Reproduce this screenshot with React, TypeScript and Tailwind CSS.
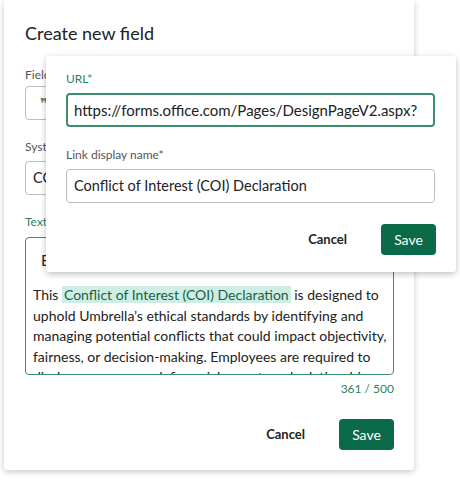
import React from 'react';

const font = { fontFamily: 'Lato, "Noto Sans", sans-serif' };

function Label({ children, green }: { children: React.ReactNode; green?: boolean }) {
  return (
    <div className={`text-[12px] leading-[18px] ${green ? 'text-[#2f7f5f]' : 'text-[#555]'}`}>
      {children}
    </div>
  );
}

function LinkPopover() {
  return (
    <div className="absolute left-[46px] top-[56px] w-[410px] h-[216px] bg-white rounded-[3px] shadow-[0_2px_6px_rgba(0,0,0,0.25)] px-[20px] pt-[14px]">
      <Label green>URL*</Label>
      <div className="mt-[5px] h-[34px] w-[369px] rounded-[4px] border-2 border-[#3b8f6e] flex items-center px-[6px] text-[15px] text-[#222] whitespace-nowrap overflow-hidden">
        https://forms.office.com/Pages/DesignPageV2.aspx?
      </div>
      <div className="mt-[19px]">
        <Label>Link display name*</Label>
      </div>
      <div className="mt-[5px] h-[34px] w-[369px] rounded-[4px] border border-[#bdbdbd] flex items-center px-[7px] text-[14.5px] text-[#222]">
        Conflict of Interest (COI) Declaration
      </div>
      <div className="mt-[21px] flex items-center justify-end gap-[34px]">
        <button className="text-[13px] font-bold text-[#222]">Cancel</button>
        <button className="h-[31px] w-[55px] rounded-[4px] bg-[#0b6a47] text-white text-[14px]">Save</button>
      </div>
    </div>
  );
}

export default function App() {
  return (
    <div className="relative w-[460px] h-[480px] bg-white overflow-hidden" style={font}>
      {/* main dialog */}
      <div className="ml-[4px] w-[410px] h-[470px] bg-white rounded-b-[3px] shadow-[0_2px_6px_rgba(0,0,0,0.22)] px-[21px] pt-[19px]">
        <h2 className="text-[18px] leading-[28px] text-[#222]">Create new field</h2>

        <div className="mt-[19px]">
          <Label>Field</Label>
        </div>
        <div className="mt-[2px] h-[34px] w-[120px] rounded-[4px] border border-[#bdbdbd] flex items-center pl-[14px] text-[15px] text-[#777]">
          ❞
        </div>

        <div className="mt-[18px]">
          <Label>System name</Label>
        </div>
        <div className="mt-[5px] h-[34px] w-[368px] rounded-[4px] border border-[#bdbdbd] flex items-center px-[7px] text-[14.5px] text-[#222]">
          COI Declaration
        </div>

        <div className="mt-[18px]">
          <Label green>Text</Label>
        </div>
        <div className="mt-[6px] h-[138px] w-[369px] rounded-[4px] border border-[#3b8f6e] overflow-hidden">
          <div className="h-[44px] flex items-center pl-[15px] text-[15px] text-[#222]">B</div>
          <div className="px-[7px] pt-[3px] text-[14px] leading-[20.5px] text-[#222] whitespace-nowrap">
            This <span className="bg-[#cdeee4] text-[#1d5e45] px-[2px]">Conflict of Interest (COI) Declaration</span> is designed to
            <br />
            uphold Umbrella’s ethical standards by identifying and
            <br />
            managing potential conflicts that could impact objectivity,
            <br />
            fairness, or decision-making. Employees are required to
            <br />
            disclose any personal, financial, or external relationships
          </div>
        </div>
        <div className="w-[369px] mt-[6px] text-right text-[12px] leading-[16px] text-[#2f7f5f]">361 / 500</div>

        <div className="w-[369px] mt-[22px] flex items-center justify-end gap-[34px]">
          <button className="text-[13px] font-bold text-[#222]">Cancel</button>
          <button className="h-[31px] w-[55px] rounded-[4px] bg-[#0b6a47] text-white text-[14px]">Save</button>
        </div>
      </div>

      <LinkPopover />
    </div>
  );
}
